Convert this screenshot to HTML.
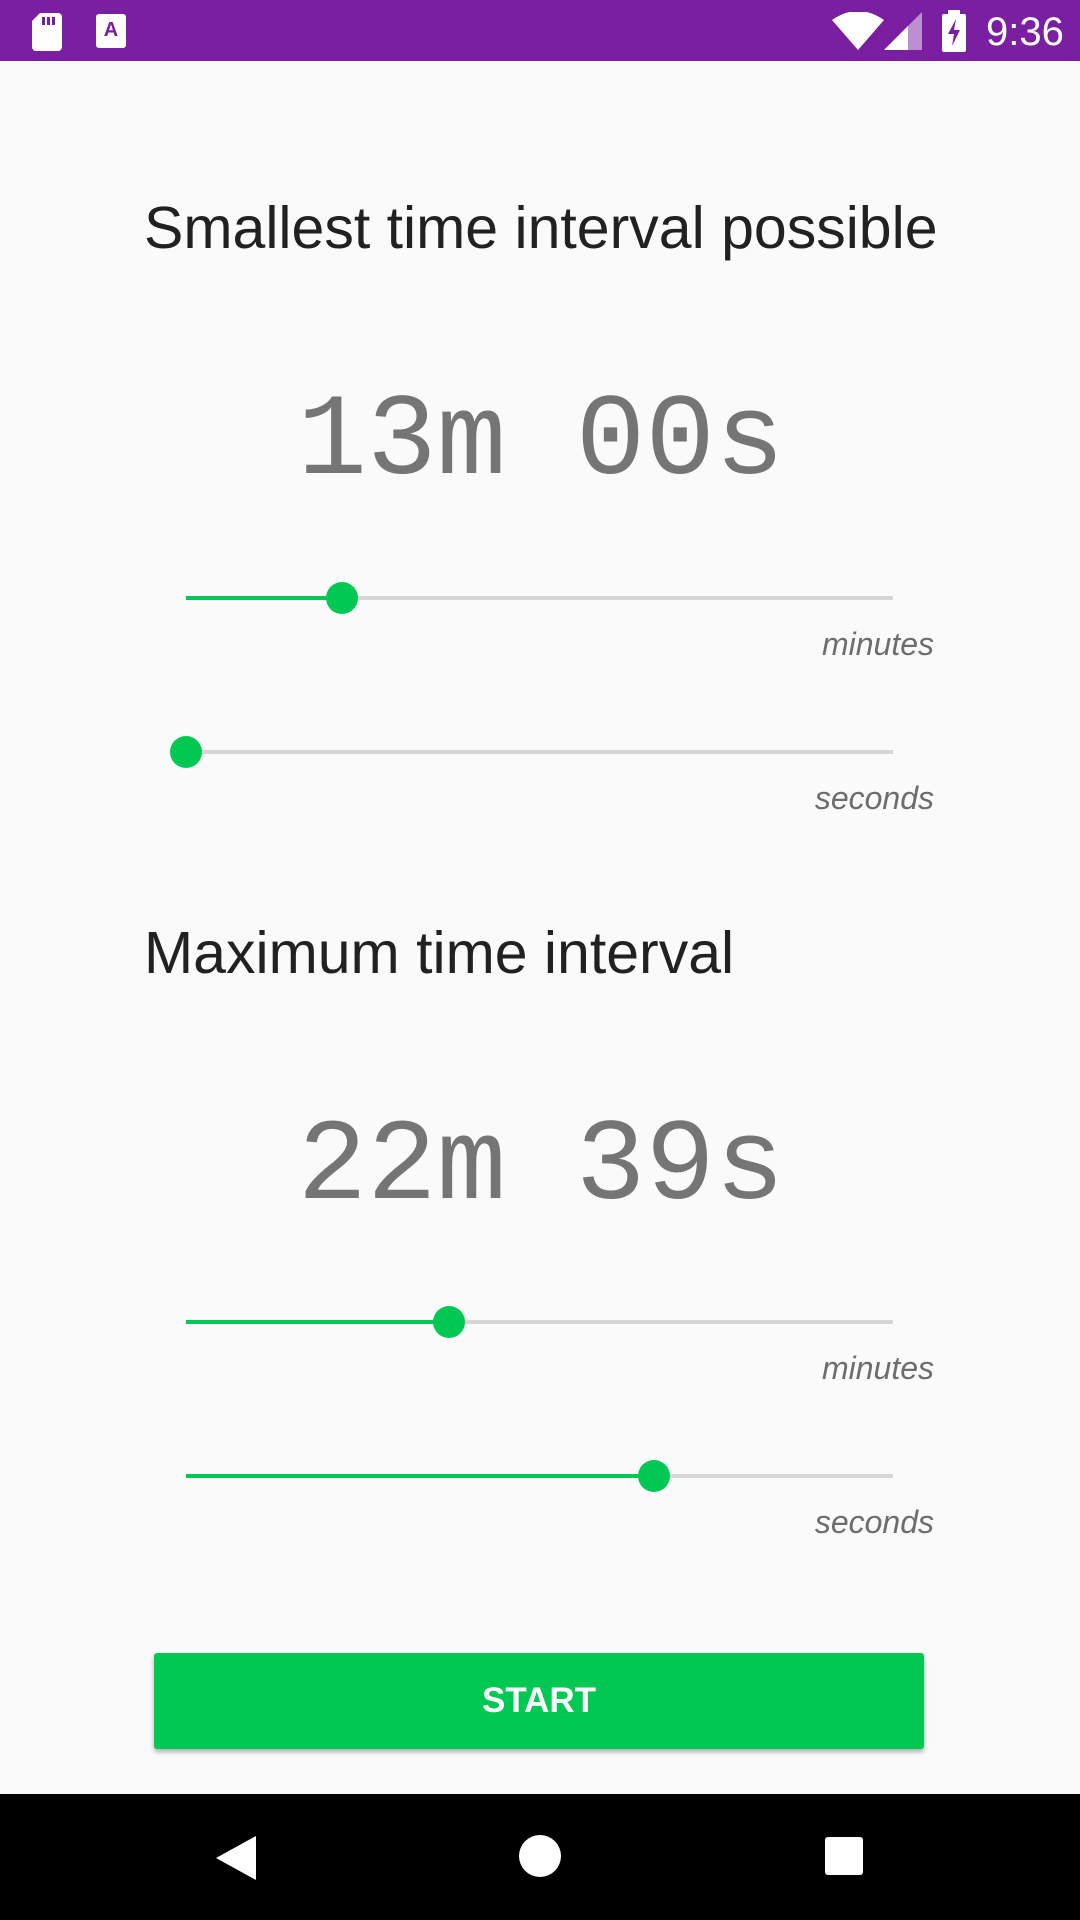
<!DOCTYPE html>
<html><head><meta charset="utf-8"><style>
*{margin:0;padding:0;box-sizing:border-box}
body{width:1080px;height:1920px;background:#fafafa;position:relative;overflow:hidden;font-family:"Liberation Sans",Roboto,sans-serif}
.sb{position:absolute;top:0;left:0;width:1080px;height:61px;background:#7B1FA2}
.abs{position:absolute}
.title{position:absolute;left:144px;font-size:59px;color:#212121;line-height:1}
.time{position:absolute;left:0;width:1080px;text-align:center;font-family:"Liberation Mono",monospace;font-size:116px;color:#757575;line-height:1;padding-left:2px}
.track{position:absolute;left:186px;width:707px;height:4px;background:#d6d6d6}
.fill{position:absolute;left:0;top:0;height:4px;background:#00C853}
.thumb{position:absolute;width:32px;height:32px;border-radius:50%;background:#00C853;top:-14px;margin-left:-16px}
.lbl{position:absolute;right:146px;font-size:32px;font-style:italic;color:#6d6d6d;line-height:1}
.btn{position:absolute;left:154px;top:1653px;width:770px;height:96px;background:#00C853;border-radius:3px;box-shadow:0 3px 5px rgba(0,0,0,.3);color:#fff;font-size:35px;font-weight:bold;text-align:center;line-height:96px}
.nav{position:absolute;left:0;top:1794px;width:1080px;height:126px;background:#000}
</style></head><body>
<div class="sb">
 <svg class="abs" style="left:32px;top:13px" width="30" height="38" viewBox="0 0 30 38"><path d="M8 0H26a4 4 0 0 1 4 4V34a4 4 0 0 1-4 4H4a4 4 0 0 1-4-4V8z" fill="#fff"/><rect x="10" y="4" width="3" height="8" fill="#7B1FA2"/><rect x="15" y="4" width="3" height="8" fill="#7B1FA2"/><rect x="20" y="4" width="3" height="8" fill="#7B1FA2"/></svg>
 <svg class="abs" style="left:96px;top:14px" width="30" height="34" viewBox="0 0 30 34"><rect width="30" height="34" rx="3" fill="#fff"/><text x="15" y="22" font-size="20" font-weight="bold" text-anchor="middle" fill="#7B1FA2" font-family="Liberation Sans">A</text></svg>
 <svg class="abs" style="left:832px;top:12px" width="52" height="38" viewBox="0 0 52 38"><path d="M0 8Q26-10 52 8L26 38Z" fill="#fff"/></svg>
 <svg class="abs" style="left:884px;top:12px" width="38" height="38" viewBox="0 0 38 38"><path d="M38 0V38H0Z" fill="#fff" opacity=".5"/><path d="M24 14V38H0Z" fill="#fff"/></svg>
 <svg class="abs" style="left:942px;top:10px" width="24" height="42" viewBox="0 0 24 42"><rect x="6" y="0" width="12" height="4" fill="#fff"/><rect x="0" y="4" width="24" height="38" rx="2" fill="#fff"/><path d="M14 9L6 24H12L10 36L18 20H12Z" fill="#7B1FA2"/></svg>
 <div class="abs" style="left:986px;top:10px;font-size:40px;color:#fff">9:36</div>
</div>

<div class="title" style="top:199px">Smallest time interval possible</div>
<div class="time" style="top:384px">13m 00s</div>
<div class="track" style="top:596px"><div class="fill" style="width:156px"></div><div class="thumb" style="left:156px"></div></div>
<div class="lbl" style="top:628px">minutes</div>
<div class="track" style="top:750px"><div class="thumb" style="left:0"></div></div>
<div class="lbl" style="top:782px">seconds</div>

<div class="title" style="top:924px">Maximum time interval</div>
<div class="time" style="top:1109px">22m 39s</div>
<div class="track" style="top:1320px"><div class="fill" style="width:263px"></div><div class="thumb" style="left:263px"></div></div>
<div class="lbl" style="top:1352px">minutes</div>
<div class="track" style="top:1474px"><div class="fill" style="width:468px"></div><div class="thumb" style="left:468px"></div></div>
<div class="lbl" style="top:1506px">seconds</div>

<div class="btn">START</div>

<div class="nav">
 <svg class="abs" style="left:216px;top:42px" width="40" height="44" viewBox="0 0 40 44"><path d="M40 0V44L0 22Z" fill="#fff"/></svg>
 <div class="abs" style="left:519px;top:41px;width:42px;height:42px;border-radius:50%;background:#fff"></div>
 <div class="abs" style="left:825px;top:43px;width:38px;height:38px;border-radius:3px;background:#fff"></div>
</div>
</body></html>
